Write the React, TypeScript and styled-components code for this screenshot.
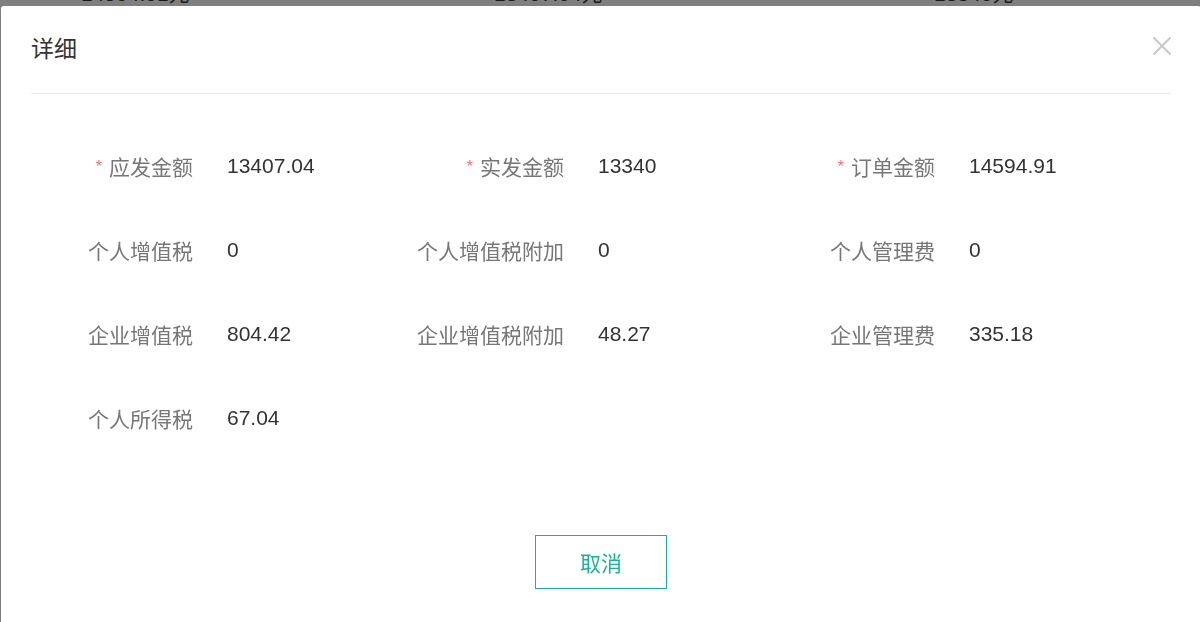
import styled, { createGlobalStyle } from "styled-components";

const GlobalStyle = createGlobalStyle`
  html, body {
    margin: 0;
    padding: 0;
    height: 100%;
    overflow: hidden;
    background: #fff;
    font-family: "Liberation Sans", "Noto Sans CJK SC", sans-serif;
  }
`;

const fields = [
  { label: "应发金额", value: "13407.04", required: true },
  { label: "实发金额", value: "13340", required: true },
  { label: "订单金额", value: "14594.91", required: true },
  { label: "个人增值税", value: "0" },
  { label: "个人增值税附加", value: "0" },
  { label: "个人管理费", value: "0" },
  { label: "企业增值税", value: "804.42" },
  { label: "企业增值税附加", value: "48.27" },
  { label: "企业管理费", value: "335.18" },
  { label: "个人所得税", value: "67.04" },
];

function App() {
  return (
    <>
      <GlobalStyle />
      <Page>
        <SummaryRow>
          <SummaryCell $width={413}>14594.91元</SummaryCell>
          <SummaryCell $width={440}>13407.04元</SummaryCell>
          <SummaryCell $width={200}>13340元</SummaryCell>
        </SummaryRow>
      </Page>
      <Mask />
      <Dialog>
        <Header>
          <Title>详细</Title>
          <CloseButton aria-label="close">
            <svg width="20" height="20" viewBox="0 0 20 20">
              <path d="M1.5 1.5 L18.5 18.5 M18.5 1.5 L1.5 18.5" stroke="#c8c8c8" strokeWidth="2" fill="none" />
            </svg>
          </CloseButton>
        </Header>
        <Body>
          <FieldGrid>
            {fields.map((f) => (
              <Field key={f.label}>
                <Label>
                  {f.required && <Star>*</Star>}
                  {f.label}
                </Label>
                <Value>{f.value}</Value>
              </Field>
            ))}
          </FieldGrid>
        </Body>
        <Footer>
          <CancelButton>取消</CancelButton>
        </Footer>
      </Dialog>
    </>
  );
}

const Page = styled.div`
  height: 622px;
  overflow: hidden;
`;

const SummaryRow = styled.div`
  display: flex;
  margin-top: -18px;
  padding-left: 81px;
`;

const SummaryCell = styled.div<{ $width: number }>`
  width: ${(p) => p.$width}px;
  flex-shrink: 0;
  font-size: 21px;
  line-height: 24px;
  color: #333;
`;

const Mask = styled.div`
  position: fixed;
  inset: 0;
  background: rgba(0, 0, 0, 0.5);
`;

const Dialog = styled.div`
  position: fixed;
  top: 6px;
  left: 1px;
  width: 1200px;
  height: 660px;
  background: #fff;
  border-radius: 3px;
  display: flex;
  flex-direction: column;
`;

const Header = styled.div`
  margin: 0 30px;
  padding: 30px 0;
  border-bottom: 1px solid #e8e8e8;
  display: flex;
  align-items: center;
  justify-content: space-between;
`;

const Title = styled.div`
  font-size: 23px;
  line-height: 27px;
  color: #333;
`;

const CloseButton = styled.button`
  border: none;
  background: none;
  padding: 0;
  margin-right: -1px;
  margin-top: -7px;
  display: flex;
  cursor: pointer;
`;

const Body = styled.div`
  padding: 30px 0 0 31px;
`;

const FieldGrid = styled.div`
  display: grid;
  grid-template-columns: repeat(3, 371px);
  grid-auto-rows: 84px;
`;

const Field = styled.div`
  display: flex;
  align-items: center;
`;

const Label = styled.div`
  width: 161px;
  text-align: right;
  font-size: 21px;
  color: #777;
  white-space: nowrap;
`;

const Star = styled.span`
  color: #f56c6c;
  font-size: 16px;
  margin-right: 7px;
  position: relative;
  top: -3px;
`;

const Value = styled.div`
  margin-left: 34px;
  font-size: 21px;
  color: #333;
`;

const Footer = styled.div`
  display: flex;
  justify-content: center;
  margin-top: 75px;
`;

const CancelButton = styled.button`
  width: 132px;
  height: 54px;
  background: #fff;
  border: 1.5px solid #1ab394;
  color: #1ab394;
  font-family: "Liberation Sans", "Noto Sans CJK SC", sans-serif;
  font-size: 21px;
  cursor: pointer;
`;

export default App;
